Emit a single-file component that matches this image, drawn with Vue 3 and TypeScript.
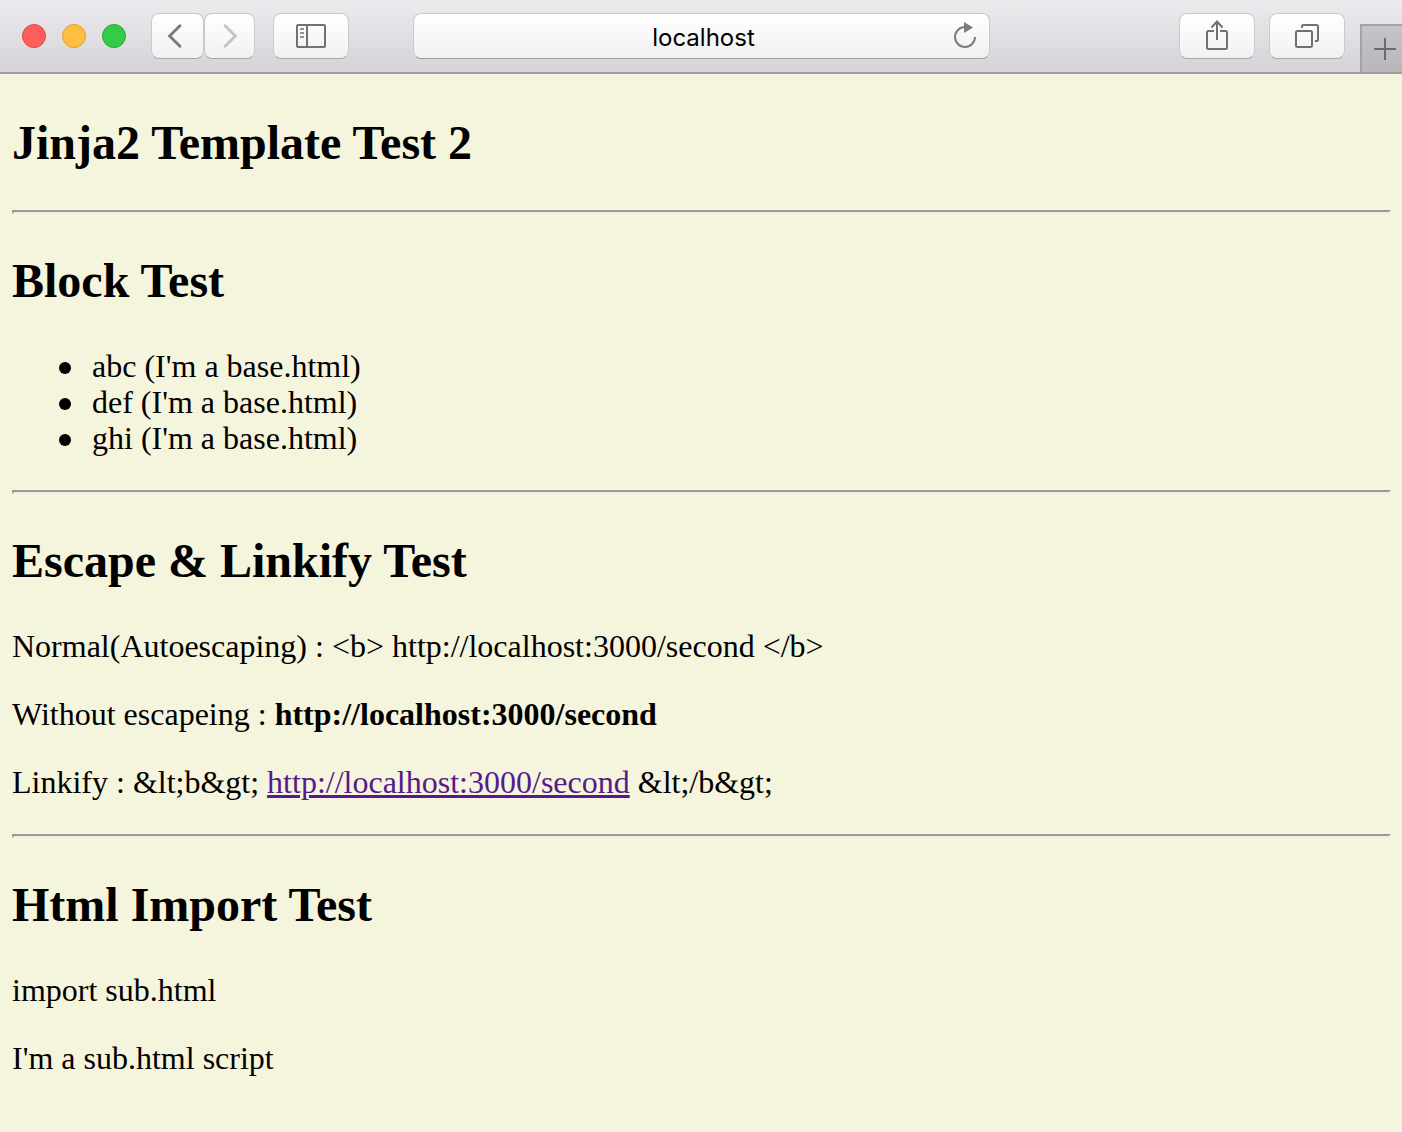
<script setup lang="ts">
import { ref } from 'vue'

interface ListEntry {
  name: string
  note: string
}

const address = ref<string>('localhost')
const target = 'http://localhost:3000/second'

const entries: ListEntry[] = [
  { name: 'abc', note: "(I'm a base.html)" },
  { name: 'def', note: "(I'm a base.html)" },
  { name: 'ghi', note: "(I'm a base.html)" },
]

const escaped = `Normal(Autoescaping) : <b> ${target} </b>`
const linkifyOpen = 'Linkify : &lt;b&gt; '
const linkifyClose = ' &lt;/b&gt;'
</script>

<template>
  <div class="window">
    <header class="toolbar">
      <div class="lights">
        <button type="button" class="light close" aria-label="Close"></button>
        <button type="button" class="light minimize" aria-label="Minimize"></button>
        <button type="button" class="light expand" aria-label="Full screen"></button>
      </div>

      <nav class="history">
        <button type="button" class="btn back" aria-label="Back">
          <svg width="52" height="44" viewBox="0 0 52 44" fill="none" stroke="#7b7b7b" stroke-width="3" stroke-linecap="round">
            <path d="M28.5 11.5L18 22L28.5 32.5" />
          </svg>
        </button>
        <button type="button" class="btn forward" aria-label="Forward" disabled>
          <svg width="50" height="44" viewBox="0 0 50 44" fill="none" stroke="#c4c4c4" stroke-width="3" stroke-linecap="round">
            <path d="M20.5 11.5L31 22L20.5 32.5" />
          </svg>
        </button>
      </nav>

      <button type="button" class="btn wide sidebar" aria-label="Show sidebar">
        <svg width="32" height="26" viewBox="0 0 32 26" fill="none" stroke="#717171">
          <rect x="2" y="2" width="28" height="22" rx="1" stroke-width="2" />
          <path d="M12 2V24" stroke-width="2" />
          <path d="M5 6H9M5 10H9M5 14H9" stroke="#929292" stroke-width="2" />
        </svg>
      </button>

      <form class="address" @submit.prevent>
        <input v-model="address" type="text" aria-label="Address" spellcheck="false" />
        <button type="button" class="reload" aria-label="Reload">
          <svg width="28" height="30" viewBox="0 0 28 30">
            <path d="M14 7A10 10 0 1 0 24 17" fill="none" stroke="#7b7b7b" stroke-width="2" />
            <path d="M13 2L22 7.500L13 13Z" fill="#7b7b7b" />
          </svg>
        </button>
      </form>

      <div class="actions">
        <button type="button" class="btn wide" aria-label="Share">
          <svg width="26" height="34" viewBox="0 0 26 34" fill="none" stroke="#717171" stroke-width="2">
            <path d="M10 12H4.500Q3 12 3 13.500V28.500Q3 30 4.500 30H21.500Q23 30 23 28.500V13.500Q23 12 21.500 12H16" />
            <path d="M13 21V3M7.500 8.500L13 2.500L18.500 8.500" />
          </svg>
        </button>
        <button type="button" class="btn wide" aria-label="Show all tabs">
          <svg width="24" height="24" viewBox="0 0 24 24" fill="none" stroke="#717171" stroke-width="2">
            <rect x="1" y="7" width="16" height="16" rx="1.500" />
            <path d="M7 4V2.500Q7 1 8.500 1H21.500Q23 1 23 2.500V15.500Q23 17 21.500 17H20" />
          </svg>
        </button>
      </div>

      <button type="button" class="new-tab" aria-label="New tab">
        <svg width="24" height="24" viewBox="0 0 24 24" fill="none" stroke="#6c6b6d" stroke-width="2">
          <path d="M1 12H23M12 1V23" />
        </svg>
      </button>
    </header>

    <main class="page">
      <h2>Jinja2 Template Test 2</h2>
      <hr />
      <h2>Block Test</h2>
      <ul>
        <li v-for="entry in entries" :key="entry.name">{{ entry.name }} {{ entry.note }}</li>
      </ul>
      <hr />
      <h2>Escape &amp; Linkify Test</h2>
      <p>{{ escaped }}</p>
      <p>Without escapeing : <b>{{ target }}</b></p>
      <p>{{ linkifyOpen }}<a :href="target">{{ target }}</a>{{ linkifyClose }}</p>
      <hr />
      <h2>Html Import Test</h2>
      <p>import sub.html</p>
      <p>I'm a sub.html script</p>
    </main>
  </div>
</template>

<style>
body {
  margin: 0;
  background: #f5f4dc;
}
</style>

<style scoped>
.window {
  display: flex;
  flex-direction: column;
  min-height: 100vh;
  background: #f5f4dc;
}

.toolbar {
  display: flex;
  align-items: center;
  box-sizing: border-box;
  height: 74px;
  padding-left: 22px;
  border-bottom: 2px solid #9f9da2;
  background: linear-gradient(#edebee, #d5d3d7);
}

button {
  padding: 0;
  font: inherit;
}

.lights {
  display: flex;
  gap: 16px;
}

.light {
  box-sizing: border-box;
  width: 24px;
  height: 24px;
  border: 1px solid;
  border-radius: 50%;
}

.close {
  border-color: #e2453f;
  background: #fd605b;
}

.minimize {
  border-color: #dfa032;
  background: #fdbe41;
}

.expand {
  border-color: #22a934;
  background: #34ca4a;
}

.history {
  display: flex;
  margin-left: 25px;
}

.btn {
  display: flex;
  align-items: center;
  justify-content: center;
  box-sizing: border-box;
  height: 46px;
  border: 1px solid #cbc9cd;
  border-bottom-color: #a9a7ab;
  border-radius: 8px;
  background: linear-gradient(#ffffff, #f1f1f1);
}

.back {
  width: 53px;
}

.forward {
  width: 51px;
}

.wide {
  width: 76px;
}

.sidebar {
  margin-left: 18px;
}

.address {
  position: relative;
  flex: 1;
  height: 46px;
  margin: 0 189px 0 64px;
}

.address input {
  box-sizing: border-box;
  width: 100%;
  height: 46px;
  padding: 2px 40px 0 44px;
  border: 1px solid #cbc9cd;
  border-bottom-color: #a09ea2;
  border-radius: 8px;
  background: linear-gradient(#ffffff, #f0f0f0);
  color: #000;
  font-family: Inter, Roboto, sans-serif;
  font-size: 24px;
  line-height: 30px;
  text-align: center;
  outline: none;
}

.reload {
  display: flex;
  position: absolute;
  top: 7px;
  right: 11px;
  border: 0;
  background: none;
}

.actions {
  display: flex;
  gap: 14px;
}

.new-tab {
  display: flex;
  align-items: center;
  align-self: flex-end;
  box-sizing: border-box;
  width: 42px;
  height: 48px;
  margin-left: 15px;
  padding-left: 11px;
  border: solid #a3a1a6;
  border-width: 2px 0 0 2px;
  background: linear-gradient(#c6c4c8, #b9b7bb);
}

.page {
  padding: 2px 11px 0 12px;
  color: #000;
  font-family: "Liberation Serif", "Times New Roman", serif;
  font-size: 32px;
  line-height: 36px;
}

h2 {
  margin: 39px 0;
  font-size: 48px;
  font-weight: 700;
  line-height: 56px;
}

hr {
  margin: 34px 0;
  border: 2px solid;
  border-color: #9a9a9a #eeeeee #eeeeee #9a9a9a;
}

ul {
  margin: 32px 0;
  padding-left: 80px;
  list-style: none;
}

li::before {
  display: inline-block;
  width: 12px;
  height: 12px;
  margin: 0 21px 0 -33px;
  border-radius: 50%;
  background: #000;
  vertical-align: 3px;
  content: "";
}

p {
  margin: 32px 0;
}

a {
  color: #551a8b;
  text-decoration: underline;
}
</style>
